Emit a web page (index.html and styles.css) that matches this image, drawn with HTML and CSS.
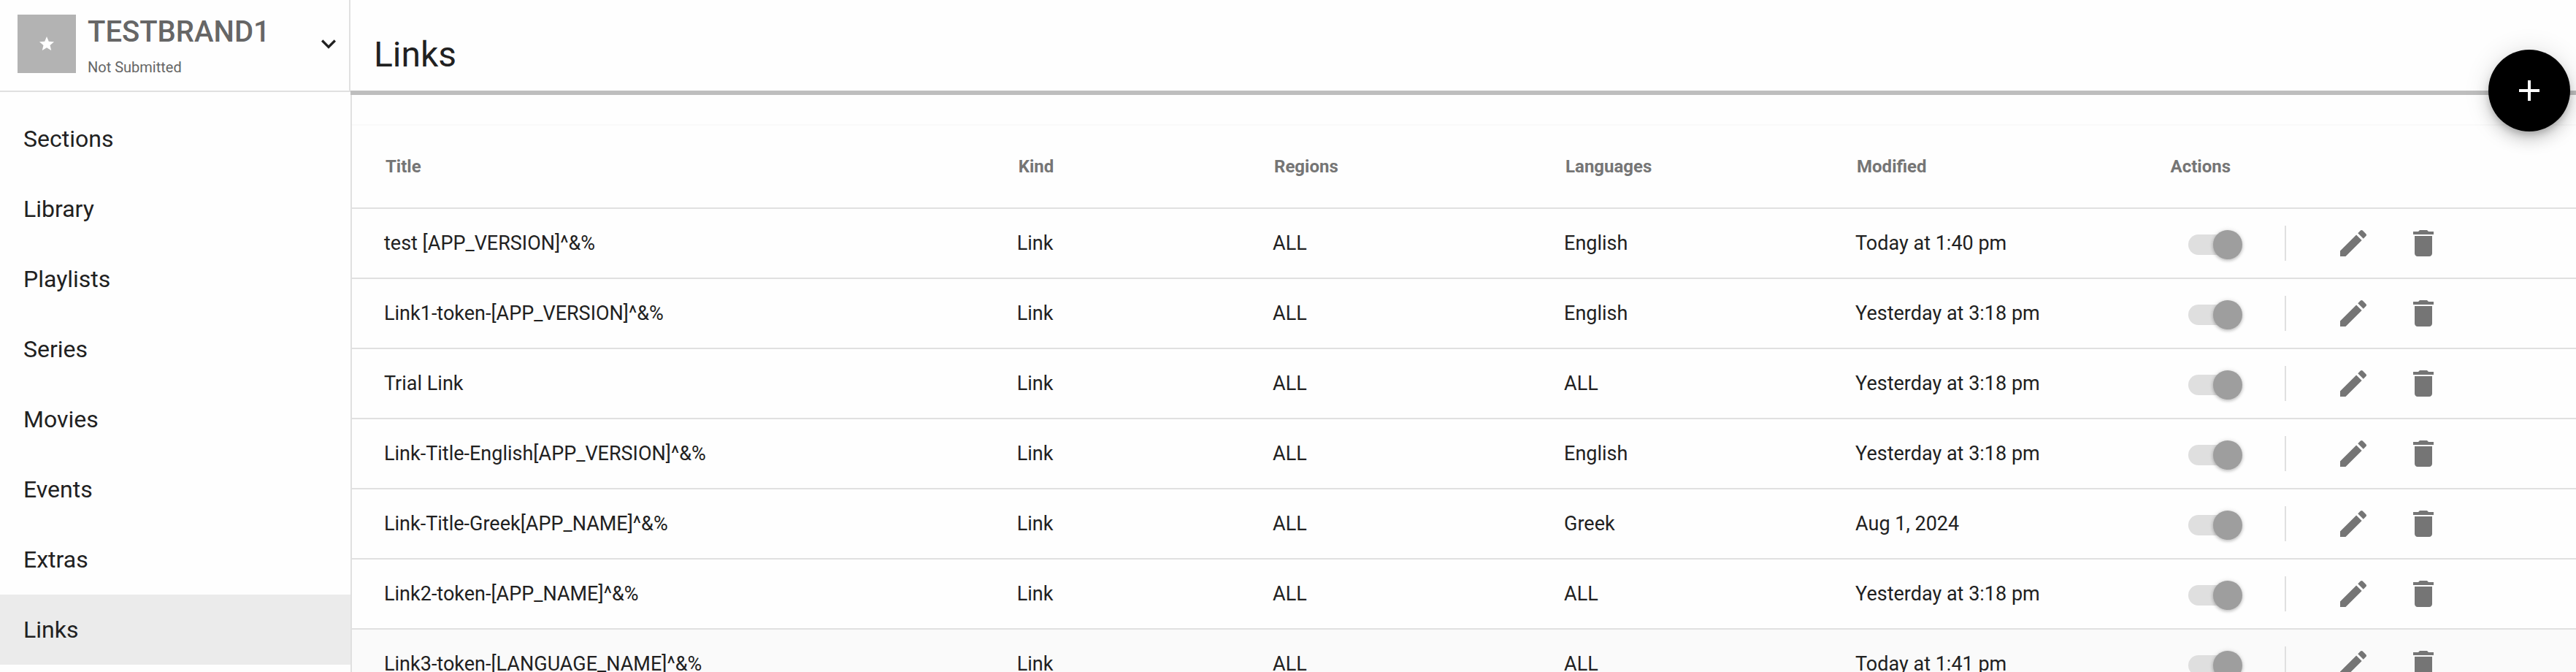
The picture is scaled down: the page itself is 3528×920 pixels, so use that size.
FILE: index.html
```html
<!DOCTYPE html>
<html lang="en">
<head>
    <meta charset="UTF-8">
    <meta name="viewport" content="width=device-width, initial-scale=1.0">
    <title>Links</title>
    <link rel="stylesheet" href="styles.css">
</head>
<body>
    <svg class="sprite" aria-hidden="true">
        <symbol id="icon-edit" viewBox="0 0 24 24">
            <path d="M3 17.25V21h3.75L17.81 9.94l-3.75-3.75L3 17.25zM20.71 7.04c.39-.39.39-1.02 0-1.41l-2.34-2.34c-.39-.39-1.02-.39-1.41 0l-1.83 1.83 3.75 3.75 1.83-1.83z"/>
        </symbol>
        <symbol id="icon-delete" viewBox="0 0 24 24">
            <path d="M6 19c0 1.1.9 2 2 2h8c1.1 0 2-.9 2-2V7H6v12zM19 4h-3.5l-1-1h-5l-1 1H5v2h14V4z"/>
        </symbol>
    </svg>

    <div class="layout">
        <aside class="sidebar">
            <div class="brand">
                <div class="avatar">
                    <svg viewBox="0 0 24 24"><path d="M12 17.27L18.18 21l-1.64-7.03L22 9.24l-7.19-.61L12 2 9.19 8.63 2 9.24l5.46 4.73L5.82 21z"/></svg>
                </div>
                <div class="brand-text">
                    <div class="brand-name">TESTBRAND1</div>
                    <div class="brand-status">Not Submitted</div>
                </div>
                <button class="brand-toggle" aria-label="Switch brand">
                    <svg viewBox="0 0 24 24"><path d="M7.41 8.59L12 13.17l4.59-4.58L18 10l-6 6-6-6 1.41-1.41z"/></svg>
                </button>
            </div>
            <nav class="nav">
                <a href="#">Sections</a>
                <a href="#">Library</a>
                <a href="#">Playlists</a>
                <a href="#">Series</a>
                <a href="#">Movies</a>
                <a href="#">Events</a>
                <a href="#">Extras</a>
                <a href="#" class="active">Links</a>
            </nav>
        </aside>

        <main class="main">
            <header class="header">
                <h1>Links</h1>
            </header>
            <button class="fab" aria-label="Add link">
                <svg viewBox="0 0 24 24"><path d="M19 13h-6v6h-2v-6H5v-2h6V5h2v6h6v2z"/></svg>
            </button>

            <div class="content">
                <table class="links">
                    <thead>
                        <tr>
                            <th class="col-title">Title</th>
                            <th class="col-kind">Kind</th>
                            <th class="col-regions">Regions</th>
                            <th class="col-languages">Languages</th>
                            <th class="col-modified">Modified</th>
                            <th>Actions</th>
                        </tr>
                    </thead>
                    <tbody>
                        <tr>
                            <td>test [APP_VERSION]^&amp;%</td>
                            <td>Link</td>
                            <td>ALL</td>
                            <td>English</td>
                            <td>Today at 1:40 pm</td>
                            <td>
                                <div class="actions">
                                    <input type="checkbox" class="switch" aria-label="Enabled" checked>
                                    <span class="divider"></span>
                                    <button aria-label="Edit"><svg><use href="#icon-edit"/></svg></button>
                                    <button aria-label="Delete"><svg><use href="#icon-delete"/></svg></button>
                                </div>
                            </td>
                        </tr>
                        <tr>
                            <td>Link1-token-[APP_VERSION]^&amp;%</td>
                            <td>Link</td>
                            <td>ALL</td>
                            <td>English</td>
                            <td>Yesterday at 3:18 pm</td>
                            <td>
                                <div class="actions">
                                    <input type="checkbox" class="switch" aria-label="Enabled" checked>
                                    <span class="divider"></span>
                                    <button aria-label="Edit"><svg><use href="#icon-edit"/></svg></button>
                                    <button aria-label="Delete"><svg><use href="#icon-delete"/></svg></button>
                                </div>
                            </td>
                        </tr>
                        <tr>
                            <td>Trial Link</td>
                            <td>Link</td>
                            <td>ALL</td>
                            <td>ALL</td>
                            <td>Yesterday at 3:18 pm</td>
                            <td>
                                <div class="actions">
                                    <input type="checkbox" class="switch" aria-label="Enabled" checked>
                                    <span class="divider"></span>
                                    <button aria-label="Edit"><svg><use href="#icon-edit"/></svg></button>
                                    <button aria-label="Delete"><svg><use href="#icon-delete"/></svg></button>
                                </div>
                            </td>
                        </tr>
                        <tr>
                            <td>Link-Title-English[APP_VERSION]^&amp;%</td>
                            <td>Link</td>
                            <td>ALL</td>
                            <td>English</td>
                            <td>Yesterday at 3:18 pm</td>
                            <td>
                                <div class="actions">
                                    <input type="checkbox" class="switch" aria-label="Enabled" checked>
                                    <span class="divider"></span>
                                    <button aria-label="Edit"><svg><use href="#icon-edit"/></svg></button>
                                    <button aria-label="Delete"><svg><use href="#icon-delete"/></svg></button>
                                </div>
                            </td>
                        </tr>
                        <tr>
                            <td>Link-Title-Greek[APP_NAME]^&amp;%</td>
                            <td>Link</td>
                            <td>ALL</td>
                            <td>Greek</td>
                            <td>Aug 1, 2024</td>
                            <td>
                                <div class="actions">
                                    <input type="checkbox" class="switch" aria-label="Enabled" checked>
                                    <span class="divider"></span>
                                    <button aria-label="Edit"><svg><use href="#icon-edit"/></svg></button>
                                    <button aria-label="Delete"><svg><use href="#icon-delete"/></svg></button>
                                </div>
                            </td>
                        </tr>
                        <tr>
                            <td>Link2-token-[APP_NAME]^&amp;%</td>
                            <td>Link</td>
                            <td>ALL</td>
                            <td>ALL</td>
                            <td>Yesterday at 3:18 pm</td>
                            <td>
                                <div class="actions">
                                    <input type="checkbox" class="switch" aria-label="Enabled" checked>
                                    <span class="divider"></span>
                                    <button aria-label="Edit"><svg><use href="#icon-edit"/></svg></button>
                                    <button aria-label="Delete"><svg><use href="#icon-delete"/></svg></button>
                                </div>
                            </td>
                        </tr>
                        <tr class="highlighted">
                            <td>Link3-token-[LANGUAGE_NAME]^&amp;%</td>
                            <td>Link</td>
                            <td>ALL</td>
                            <td>ALL</td>
                            <td>Today at 1:41 pm</td>
                            <td>
                                <div class="actions">
                                    <input type="checkbox" class="switch" aria-label="Enabled" checked>
                                    <span class="divider"></span>
                                    <button aria-label="Edit"><svg><use href="#icon-edit"/></svg></button>
                                    <button aria-label="Delete"><svg><use href="#icon-delete"/></svg></button>
                                </div>
                            </td>
                        </tr>
                    </tbody>
                </table>
            </div>
        </main>
    </div>
</body>
</html>
```
FILE: styles.css
```css
* {
    box-sizing: border-box;
}
body {
    margin: 0;
    background-color: #fefefe;
    color: #212121;
    font-family: Roboto, sans-serif;
}
button {
    border: none;
    padding: 0;
    background: none;
    cursor: pointer;
}
svg {
    display: block;
    fill: currentColor;
}
.sprite {
    display: none;
}
.layout {
    display: flex;
    height: 100vh;
    overflow: hidden;
}

/* sidebar */
.sidebar {
    flex: 0 0 480px;
}
.brand {
    display: flex;
    gap: 16px;
    height: 126px;
    padding: 20px 8px 0 24px;
    border-right: 2px solid #e0e0e0;
    border-bottom: 2px solid #e0e0e0;
}
.avatar {
    display: flex;
    justify-content: center;
    align-items: center;
    width: 80px;
    height: 80px;
    background-color: #b3b3b3;
    color: #fff;
}
.avatar svg {
    width: 24px;
    height: 24px;
}
.brand-text {
    flex: 1;
    color: #666;
}
.brand-name {
    font-size: 40px;
    font-weight: 500;
    line-height: 48px;
    margin-bottom: 8px;
}
.brand-status {
    font-size: 20px;
    line-height: 32px;
}
.brand-toggle {
    width: 40px;
    height: 80px;
    color: #212121;
}
.nav {
    padding-top: 16px;
}
.nav a {
    display: block;
    padding: 0 32px;
    font-size: 32px;
    line-height: 96px;
    color: #212121;
    text-decoration: none;
}
.nav a.active {
    background-color: #ebebeb;
}

/* main area */
.main {
    position: relative;
    display: flex;
    flex-direction: column;
    flex: 1;
    min-width: 0;
}
.header {
    height: 130px;
    padding: 26px 32px 0;
    border-bottom: 6px solid #bebebe;
}
.header h1 {
    margin: 0;
    font-size: 48px;
    font-weight: 400;
    line-height: 98px;
}
.fab {
    position: absolute;
    top: 68px;
    right: 8px;
    display: flex;
    justify-content: center;
    align-items: center;
    width: 112px;
    height: 112px;
    border-radius: 50%;
    background-color: #000;
    color: #fff;
    box-shadow: 0 6px 10px -2px rgba(0,0,0,0.2), 0 12px 20px rgba(0,0,0,0.14), 0 2px 36px rgba(0,0,0,0.12);
}
.fab svg {
    width: 48px;
    height: 48px;
}
.content {
    flex: 1;
    min-height: 0;
    overflow: hidden;
    padding-top: 40px;
    border-left: 2px solid #e0e0e0;
}

/* table */
.links {
    width: 100%;
    table-layout: fixed;
    border-spacing: 0;
    border-top: 2px solid #f9f9f9;
}
.links th {
    height: 114px;
    padding: 0 0 0 2px;
    border-bottom: 2px solid #e0e0e0;
    color: #757575;
    font-size: 24px;
    font-weight: 700;
    text-align: left;
}
.links td {
    height: 96px;
    padding: 0;
    border-bottom: 2px solid #e0e0e0;
    font-size: 27px;
}
.links th:first-child {
    padding-left: 46px;
}
.links td:first-child {
    padding-left: 44px;
}
.links .col-title {
    width: 29.9%;
}
.links .col-kind {
    width: 11.5%;
}
.links .col-regions,
.links .col-languages {
    width: 13.1%;
}
.links .col-modified {
    width: 14.1%;
}
.links .highlighted {
    background-color: #fafafa;
}

/* row actions */
.actions {
    display: flex;
    align-items: center;
    padding-left: 26px;
}
.actions button {
    margin-right: 48px;
    color: #757575;
}
.actions button svg {
    width: 48px;
    height: 48px;
}
.divider {
    width: 2px;
    height: 48px;
    margin: 0 68px 0 58px;
    background-color: #e0e0e0;
}
.switch {
    appearance: none;
    position: relative;
    width: 74px;
    height: 40px;
    margin: 4px 0 0;
    cursor: pointer;
}
.switch::before {
    content: "";
    position: absolute;
    top: 6px;
    left: 0;
    width: 68px;
    height: 28px;
    border-radius: 14px;
    background-color: #dfdfdf;
}
.switch::after {
    content: "";
    position: absolute;
    top: 0;
    left: 0;
    width: 40px;
    height: 40px;
    border-radius: 50%;
    background-color: #9e9e9e;
    box-shadow: 0 2px 4px rgba(0,0,0,0.2), 0 0 6px rgba(0,0,0,0.12);
}
.switch:checked::after {
    left: 34px;
}
```
